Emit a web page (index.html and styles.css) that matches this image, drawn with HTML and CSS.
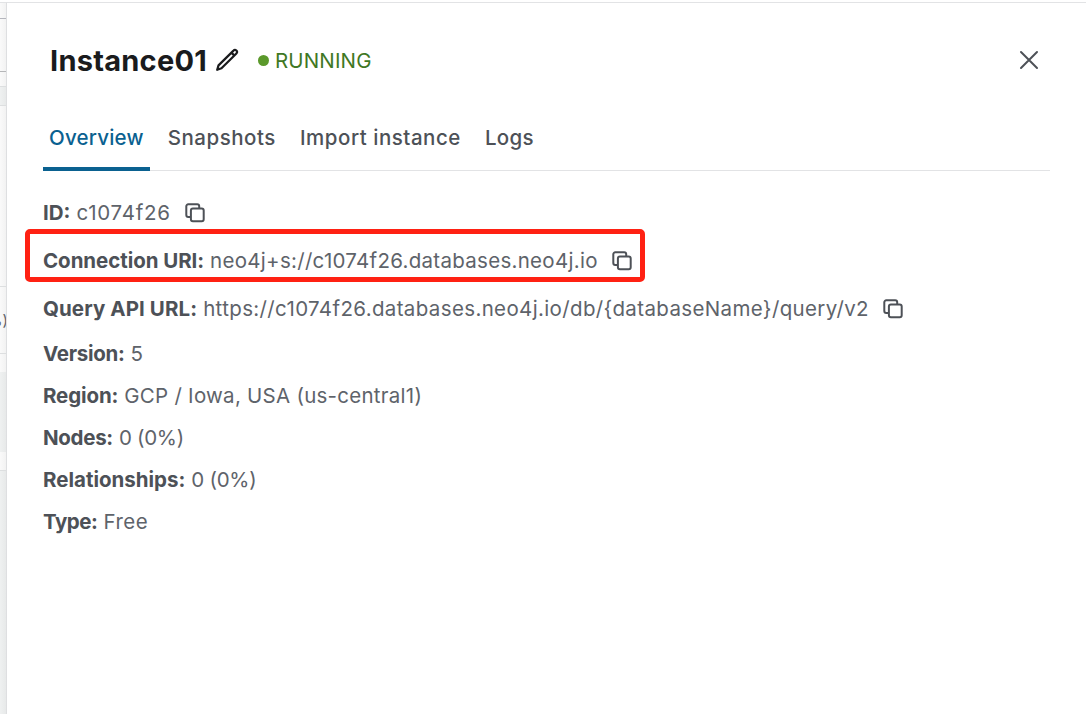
FILE: index.html
```html
<!DOCTYPE html>
<html lang="en">
<head>
<meta charset="utf-8">
<title>Instance01</title>
<link rel="stylesheet" href="styles.css">
</head>
<body>
<svg width="0" height="0" class="defs">
  <symbol id="copy" viewBox="0 0 20 20">
    <path d="M5.500 13.900H3.300a2 2 0 0 1-2-2V3.300a2 2 0 0 1 2-2h8.900a2 2 0 0 1 2 2v2"/>
    <rect x="5.900" y="5.500" width="12.800" height="12.800" rx="2"/>
  </symbol>
</svg>
<div class="app">
  <div class="backdrop">
    <div class="bar head"></div><div class="bar field"></div><div class="bar gap"></div><div class="bar thead"></div>
    <div class="bar row"></div><div class="bar usage"><span>%)</span></div><div class="bar foot"></div>
    <div class="bar shade"></div><div class="bar end"></div><div class="bar rest"></div>
  </div>
  <main class="panel">
    <header class="top">
      <h1>Instance01</h1>
      <svg class="pencil" viewBox="0 0 24 24"><path d="M2.200 21.800 L3.500 17.400 L18.500 2.600 a1.900 1.900 0 0 1 2.900 2.800 L6.500 20.300 Z M16.400 4.600l3 3"/></svg>
      <span class="dot"></span><span class="status">RUNNING</span>
      <svg class="close" viewBox="0 0 20 20"><path d="M2 2l16 16M18 2L2 18"/></svg>
    </header>
    <nav class="tabs">
      <a class="tab active"><span class="t1">Overview</span></a>
      <a class="tab"><span class="t2">Snapshots</span></a>
      <a class="tab"><span class="t3">Import instance</span></a>
      <a class="tab"><span class="t4">Logs</span></a>
    </nav>
    <section class="details">
      <div class="item tall"><b class="k1">ID:</b><span class="v1">c1074f26</span><svg class="copy"><use href="#copy"/></svg></div>
      <div class="item tall marked"><b class="k2">Connection URI:</b><span class="v2">neo4j+s://c1074f26.databases.neo4j.io</span><svg class="copy"><use href="#copy"/></svg></div>
      <div class="item tall"><b class="k3">Query API URL:</b><span class="v3">https://c1074f26.databases.neo4j.io/db/{databaseName}/query/v2</span><svg class="copy"><use href="#copy"/></svg></div>
      <div class="item"><b class="k4">Version:</b><span class="v4">5</span></div>
      <div class="item"><b class="k5">Region:</b><span class="v5">GCP / Iowa, USA (us-central1)</span></div>
      <div class="item"><b class="k6">Nodes:</b><span class="v6">0 (0%)</span></div>
      <div class="item"><b class="k7">Relationships:</b><span class="v7">0 (0%)</span></div>
      <div class="item"><b class="k8">Type:</b><span class="v8">Free</span></div>
    </section>
  </main>
</div>
</body>
</html>
```
FILE: styles.css
```css
*, *::after { box-sizing: border-box; }
body { margin: 0; background: #fff; font-family: Inter, "Liberation Sans", sans-serif; }
.defs { position: absolute; }
.app { display: flex; width: 1086px; height: 714px; padding-top: 2px; overflow: hidden; }
.backdrop { width: 6px; flex: none; border-top: 1px solid #e2e3e5; display: flex; flex-direction: column; background: linear-gradient(90deg, #fafafa, #f2f2f2); }
.bar { flex: none; border-bottom: 1px solid #dddfe0; }
.head { height: 16px; border-color: #b5b6bd; }
.field { height: 53px; border-color: #b5b6b8; }
.gap { height: 15px; }
.thead { height: 19px; background: linear-gradient(90deg, #eff1f1, #e7e9e9); }
.row { height: 181px; }
.usage { height: 67px; display: flex; justify-content: flex-end; align-items: center; overflow: hidden; font-size: 15px; color: #5e636a; }
.usage span { margin-right: -2px; }
.foot { height: 18px; border: 0; }
.shade { height: 80px; border: 0; background: linear-gradient(90deg, #eff1f1, #e7e9e9); }
.end { height: 19px; }
.rest { height: 250px; border: 0; background: linear-gradient(90deg, #eff1f1, #e7e9e9); }
.panel { flex: 1; border-top: 1px solid #e2e3e5; border-left: 1px solid #dedfe1; padding: 0 36px; background: #fff; }
.top { display: flex; align-items: center; height: 114px; padding-left: 7px; }
h1 { margin: 0; width: 160px; font-size: 29px; font-weight: 700; color: #1a1b1d; letter-spacing: 0.250px; white-space: nowrap; }
.pencil { width: 24px; height: 24px; margin-left: 5px; fill: none; stroke: #1a1b1d; stroke-width: 2.200; stroke-linejoin: round; }
.dot { width: 11px; height: 11px; margin-left: 19px; border-radius: 50%; background: #5b992b; }
.status { margin-left: 6px; font-size: 20.500px; font-weight: 400; color: #3f7824; letter-spacing: 0.150px; }
.close { width: 20px; height: 20px; margin-left: auto; margin-right: 11px; fill: none; stroke: #4d5157; stroke-width: 2; stroke-linecap: round; }
.tabs { display: flex; height: 54px; border-bottom: 1px solid #e2e3e5; gap: 12px; }
.tab { height: 54px; padding: 6px 6px 0; font-size: 20.500px; line-height: 30px; font-weight: 500; color: #4d5157; white-space: nowrap; }
.tab span { display: block; }
.t1 { letter-spacing: 0.200px; }
.t2 { letter-spacing: 0.530px; }
.t3 { letter-spacing: 0.530px; }
.t4 { letter-spacing: 0.300px; }
.active { color: #0a6190; border-bottom: 4px solid #0a6190; border-radius: 3px 3px 0 0; }
.details { padding-top: 18px; }
.item { display: flex; align-items: center; height: 42px; font-size: 20.500px; color: #5e636a; white-space: nowrap; }
.tall { height: 48px; }
.item b { font-weight: 700; color: #4d5157; padding-bottom: 2px; }
.item span { font-weight: 400; margin-left: 6px; padding-bottom: 2px; }
.k2 { letter-spacing: -0.050px; }
.k3 { letter-spacing: 0.090px; }
.k4 { letter-spacing: -0.300px; }
.k5 { letter-spacing: -0.120px; }
.k6 { letter-spacing: -0.300px; }
.k8 { letter-spacing: -0.450px; }
.v1 { letter-spacing: 0.750px; }
.v2 { letter-spacing: 0.285px; }
.v3 { letter-spacing: 0.360px; }
.v5 { letter-spacing: 0.260px; }
.v6, .v7 { letter-spacing: -0.280px; }
.v8 { letter-spacing: 0.500px; }
.copy { width: 20px; height: 20px; margin-left: 14px; fill: none; stroke: #4d5157; stroke-width: 2; stroke-linejoin: round; flex: none; }
.marked { position: relative; }
.marked::after { content: ""; position: absolute; left: -18.500px; top: -8.500px; width: 620px; height: 53px; border: 5px solid #ff2113; border-radius: 5px; }
```
